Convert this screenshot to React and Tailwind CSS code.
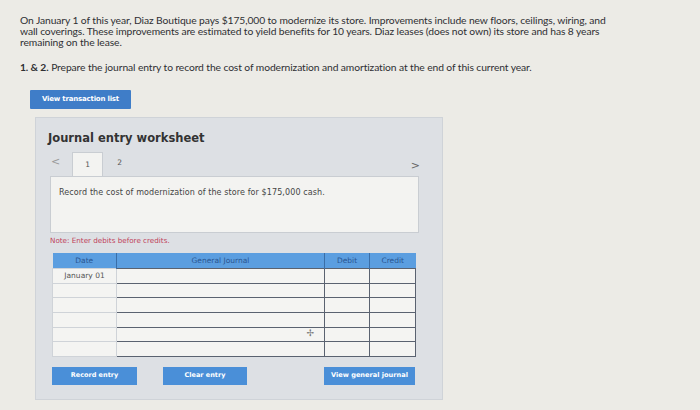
import React from 'react';

const rows = ['January 01', '', '', '', '', ''];

export default function App() {
  return (
    <div className="w-[700px] h-[410px] bg-[#ecebe6] overflow-hidden font-[Lato,sans-serif] text-[#2f2f33]">
      <div className="pl-[20px] w-[620px] pt-[15px]">
        <p className="text-[10.3px] leading-[11px] tracking-[-0.1px]">
          On January 1 of this year, Diaz Boutique pays $175,000 to modernize its store. Improvements include new floors, ceilings, wiring, and wall coverings. These improvements are estimated to yield benefits for 10 years. Diaz leases (does not own) its store and has 8 years remaining on the lease.
        </p>
        <p className="mt-[14px] text-[10.3px] leading-[11px] tracking-[-0.1px]">
          <span className="font-bold">1. &amp; 2.</span> Prepare the journal entry to record the cost of modernization and amortization at the end of this current year.
        </p>
      </div>

      <div className="pl-[30px] mt-[10px]">
        <button className="h-[19px] w-[101px] bg-[#3f7dc8] text-white text-[7px] font-bold font-[DejaVu_Sans,Verdana,sans-serif] tracking-[-0.2px] rounded-[1px]">
          View transaction list
        </button>
      </div>

      <div className="ml-[35px] mt-[8px] w-[408px] h-[283px] bg-[#dde0e4] border border-[#cfd3d8] font-[DejaVu_Sans,Verdana,sans-serif]">
        <h2 className="pl-[12px] pt-[13px] text-[11.5px] leading-[14px] font-bold text-[#333]">Journal entry worksheet</h2>

        <div className="flex items-end pl-[15px] mt-[7px] h-[24px] relative">
          <span className="text-[#999] text-[11px] mb-[5px]">&lt;</span>
          <div className="ml-[12px] w-[31px] h-[24px] bg-[#f3f3f1] border-t border-x border-[#c9cdd2] flex items-center justify-center text-[7.5px] text-[#555]">1</div>
          <div className="ml-[14px] mb-[8px] text-[7.5px] text-[#555]">2</div>
          <span className="absolute right-[22px] top-[6px] text-[#666] text-[11px]">&gt;</span>
        </div>

        <div className="ml-[14px] w-[369px] h-[57px] bg-[#f3f3f1] border border-[#c9cdd2] pl-[8px] pt-[10px] text-[8px] tracking-[0.1px] text-[#444]">
          Record the cost of modernization of the store for $175,000 cash.
        </div>

        <p className="ml-[14px] mt-[3px] text-[7.2px] leading-[10px] text-[#c0405a]">Note: Enter debits before credits.</p>

        <table className="ml-[16px] mt-[7px] w-[363px] border-collapse text-[7.5px] table-fixed">
          <colgroup>
            <col className="w-[64px]" />
            <col className="w-[208px]" />
            <col className="w-[45px]" />
            <col className="w-[46px]" />
          </colgroup>
          <thead>
            <tr className="h-[16px] bg-[#5b9ee0] text-[#2a5590]">
              <th className="font-medium border-r border-[#3a6ea8]">Date</th>
              <th className="font-medium border-r border-[#3a6ea8]">General Journal</th>
              <th className="font-medium border-r border-[#3a6ea8]">Debit</th>
              <th className="font-medium">Credit</th>
            </tr>
          </thead>
          <tbody>
            {rows.map((d, i) => (
              <tr key={i} className="h-[14.6px]">
                <td className="bg-[#f4f4f2] border border-[#cfd3d8] text-center text-[#555]">{d}</td>
                <td className="bg-[#f4f4f2] border border-[#5a6270] relative">
                  {i === 4 && <span className="absolute right-[10px] top-[1px] text-[9px] leading-none text-[#777]">✢</span>}
                </td>
                <td className="bg-[#f4f4f2] border border-[#5a6270]"></td>
                <td className="bg-[#f4f4f2] border border-[#5a6270]"></td>
              </tr>
            ))}
          </tbody>
        </table>

        <div className="flex items-center ml-[16px] mt-[10px] w-[363px]">
          <button className="h-[18px] w-[85px] bg-[#4a8fd8] text-white text-[6.5px] font-bold">Record entry</button>
          <button className="ml-[26px] h-[18px] w-[84px] bg-[#4a8fd8] text-white text-[6.5px] font-bold">Clear entry</button>
          <button className="ml-auto h-[18px] w-[91px] bg-[#4a8fd8] text-white text-[6.6px] font-bold">View general journal</button>
        </div>
      </div>
    </div>
  );
}
